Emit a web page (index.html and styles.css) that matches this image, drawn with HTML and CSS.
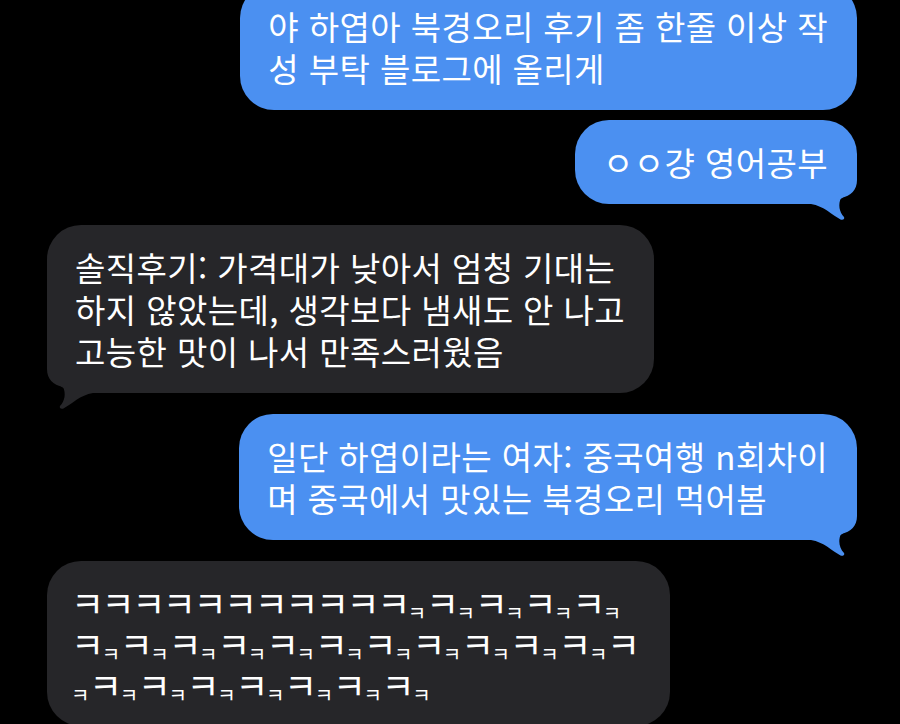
FILE: index.html
```html
<!DOCTYPE html>
<html lang="ko">
<head>
<meta charset="utf-8">
<title>메시지</title>
<link rel="stylesheet" href="styles.css">
</head>
<body>
<main class="chat">
  <div class="bubble sent first">야 하엽아 북경오리 후기 좀 한줄 이상 작<br>성 부탁 블로그에 올리게</div>
  <div class="bubble sent tight">ㅇㅇ걍 영어공부<svg class="tail tail-r" viewBox="-60 -40 62 58" width="62" height="58"><path d="M-60 -40 L0 -40 L0 -24 C0 -14 -6 -8 -16 -6 C-19 0 -18 8 -13 13 C-12 15 -14 16.5 -16.5 15.5 C-25 11 -33 2 -46 0 L-60 0 Z"/></svg></div>
  <div class="bubble recv">솔직후기: 가격대가 낮아서 엄청 기대는<br>하지 않았는데, 생각보다 냄새도 안 나고<br>고능한 맛이 나서 만족스러웠음<svg class="tail tail-l" viewBox="-60 -40 62 58" width="62" height="58"><path d="M-60 -40 L0 -40 L0 -24 C0 -14 -6 -8 -16 -6 C-19 0 -18 8 -13 13 C-12 15 -14 16.5 -16.5 15.5 C-25 11 -33 2 -46 0 L-60 0 Z"/></svg></div>
  <div class="bubble sent">일단 하엽이라는 여자: 중국여행 n회차이<br>며 중국에서 맛있는 북경오리 먹어봄<svg class="tail tail-r" viewBox="-60 -40 62 58" width="62" height="58"><path d="M-60 -40 L0 -40 L0 -24 C0 -14 -6 -8 -16 -6 C-19 0 -18 8 -13 13 C-12 15 -14 16.5 -16.5 15.5 C-25 11 -33 2 -46 0 L-60 0 Z"/></svg></div>
  <div class="bubble recv kk">ㅋㅋㅋㅋㅋㅋㅋㅋㅋㅋㅋ<span class="s">ㅋ</span>ㅋ<span class="s">ㅋ</span>ㅋ<span class="s">ㅋ</span>ㅋ<span class="s">ㅋ</span>ㅋ<span class="s">ㅋ</span><br>ㅋ<span class="s">ㅋ</span>ㅋ<span class="s">ㅋ</span>ㅋ<span class="s">ㅋ</span>ㅋ<span class="s">ㅋ</span>ㅋ<span class="s">ㅋ</span>ㅋ<span class="s">ㅋ</span>ㅋ<span class="s">ㅋ</span>ㅋ<span class="s">ㅋ</span>ㅋ<span class="s">ㅋ</span>ㅋ<span class="s">ㅋ</span>ㅋ<span class="s">ㅋ</span>ㅋ<br><span class="s">ㅋ</span>ㅋ<span class="s">ㅋ</span>ㅋ<span class="s">ㅋ</span>ㅋ<span class="s">ㅋ</span>ㅋ<span class="s">ㅋ</span>ㅋ<span class="s">ㅋ</span>ㅋ<span class="s">ㅋ</span>ㅋ<span class="s">ㅋ</span></div>
</main>
</body>
</html>
```

FILE: styles.css
```css
html, body {
  margin: 0;
  padding: 0;
  background: #000;
  height: 100%;
  overflow: hidden;
}

.chat {
  display: flex;
  flex-direction: column;
  gap: 21px;
  padding: 0 43px 0 47px;
  font-family: "Noto Sans CJK KR", "Noto Sans", sans-serif;
  font-size: 33px;
  line-height: 42px;
  letter-spacing: 0.4px;
  color: #fff;
}

.bubble {
  position: relative;
  z-index: 0;
  padding: 21px 29px 21px 28px;
  border-radius: 34px;
  white-space: nowrap;
}

.sent {
  align-self: flex-end;
  background: #4b90f1;
}

.recv {
  align-self: flex-start;
  background: #262629;
}

.first {
  margin-top: -16px;
}

.tight {
  margin-top: -11px;
}

.tail {
  position: absolute;
  z-index: -1;
  bottom: -18px;
  overflow: visible;
}

.tail-r {
  right: -2px;
  fill: #4b90f1;
}

.tail-l {
  left: -2px;
  fill: #262629;
  transform: scaleX(-1);
}

.kk {
  padding: 21px 32px 21px 24px;
  font-size: 36px;
  line-height: 41px;
  letter-spacing: -2.5px;
}

.s {
  font-size: 20px;
  line-height: 0;
  letter-spacing: -0.3px;
  vertical-align: -3px;
}
```
